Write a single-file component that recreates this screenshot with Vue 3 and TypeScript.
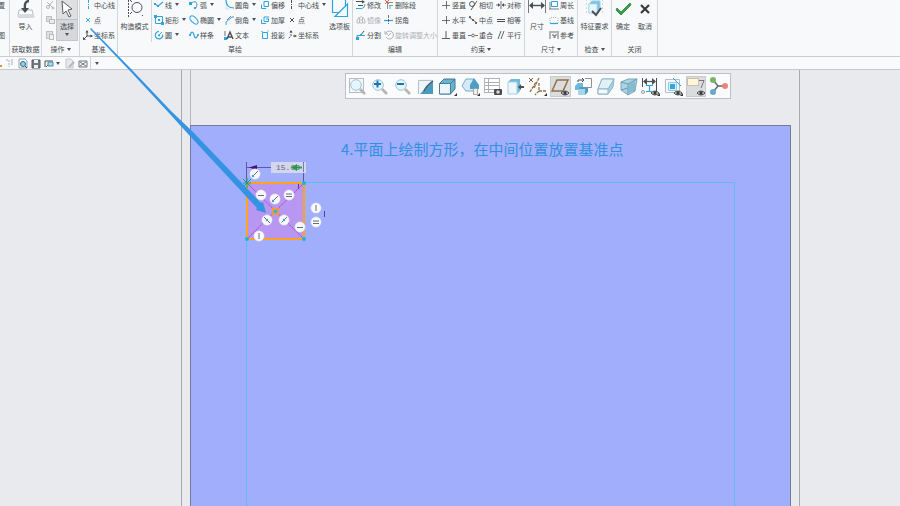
<script setup lang="ts">
interface Tool {
  icon: string
  label?: string
  name?: string
  caret?: boolean
  disabled?: boolean
}
interface Cell {
  kind: 'big' | 'stack' | 'rule'
  tool?: Tool
  active?: boolean
  tools?: Tool[]
}
interface Group {
  id: string
  label: string
  caret?: boolean
  cells: Cell[]
}

const t = (icon: string, label = '', caret = false, disabled = false): Tool => ({ icon, label, caret, disabled })
const big = (icon: string, label: string, caret = false, active = false): Cell => ({
  kind: 'big',
  tool: { icon, label, caret },
  active,
})
const stack = (...tools: Tool[]): Cell => ({ kind: 'stack', tools })

const groups: Group[] = [
  { id: 'edge', label: '', cells: [stack(t('', '置'), t('', ''), t('', '图'))] },
  { id: 'data', label: '获取数据', cells: [big('import', '导入')] },
  {
    id: 'ops',
    label: '操作',
    caret: true,
    cells: [
      stack(
        { icon: 'cut', name: '剪切', disabled: true },
        { icon: 'copy', name: '复制', disabled: true },
        { icon: 'paste', name: '粘贴', disabled: true },
      ),
      big('cursor', '选择', true, true),
    ],
  },
  { id: 'datum', label: '基准', cells: [stack(t('axisBlue', '中心线'), t('pointBlue', '点'), t('csys', '坐标系'))] },
  {
    id: 'sketch',
    label: '草绘',
    cells: [
      big('construct', '构造模式'),
      { kind: 'rule' },
      stack(t('line', '线', true), t('rect', '矩形', true), t('circle', '圆', true)),
      stack(t('arc', '弧', true), t('ellipse', '椭圆', true), t('spline', '样条')),
      stack(t('fillet', '圆角', true), t('chamfer', '倒角', true), t('text', '文本')),
      stack(t('offset', '偏移'), t('thicken', '加厚'), t('project', '投影')),
      stack(t('axis', '中心线', true), t('point', '点'), t('csysDash', '坐标系')),
      big('palette', '选项板'),
    ],
  },
  {
    id: 'edit',
    label: '编辑',
    cells: [
      stack(t('modify', '修改'), t('mirror', '镜像', false, true), t('divide', '分割')),
      stack(t('delseg', '删除段'), t('corner', '拐角'), t('rotate', '旋转调整大小', false, true)),
    ],
  },
  {
    id: 'constrain',
    label: '约束',
    caret: true,
    cells: [
      stack(t('plus', '竖直'), t('plus', '水平'), t('perp', '垂直')),
      stack(t('tangent', '相切'), t('mid', '中点'), t('coincident', '重合')),
      stack(t('symmetric', '对称'), t('equal', '相等'), t('parallel', '平行')),
    ],
  },
  {
    id: 'dimension',
    label: '尺寸',
    caret: true,
    cells: [big('dim', '尺寸'), stack(t('perimeter', '周长'), t('baseline', '基线'), t('reference', '参考'))],
  },
  { id: 'inspect', label: '检查', caret: true, cells: [big('feature', '特征要求')] },
  { id: 'close', label: '关闭', cells: [big('ok', '确定'), big('cancel', '取消')] },
]

const B = '#2fa3dc'
const D = '#4b4f53'
const s = (d: string, c: string, w = 1, extra = '') =>
  `<path d="${d}" fill="none" stroke="${c}" stroke-width="${w}" ${extra}/>`
const f = (d: string, c: string) => `<path d="${d}" fill="${c}"/>`
const dot = (x: number, y: number, r: number, c: string) => `<circle cx="${x}" cy="${y}" r="${r}" fill="${c}"/>`

const small: Record<string, string> = {
  cut: s('M2 2L8 8M8 1L4 6', '#b6b8ba') + `<circle cx="3" cy="7" r="1.5" fill="none" stroke="#b6b8ba"/><circle cx="8" cy="8" r="1" fill="none" stroke="#b6b8ba"/>`,
  copy: `<rect x="1.5" y="1.5" width="5" height="5" fill="#dcddde" stroke="#c0c1c3"/><rect x="4.5" y="4.5" width="5" height="4" fill="#ececed" stroke="#b9babc"/>`,
  paste: `<rect x="1.5" y="1.5" width="6" height="7" fill="#dfe0e1" stroke="#c0c1c3"/><rect x="4.5" y="4.5" width="4" height="5" fill="#f2f2f2" stroke="#bbb"/>`,
  axisBlue: s('M5.500 0V10', B, 1, 'stroke-dasharray="3 1 1 1"'),
  axis: s('M4.500 0V10', D, 1, 'stroke-dasharray="3 1 1 1"'),
  pointBlue: s('M3 3L7 7M7 3L3 7', B),
  point: s('M3 3L7 7M7 3L3 7', D),
  csys: s('M4 1V6H9M4 6L1 9', D) + f('M2.5 2.5L4 0L5.5 2.5ZM7.5 4.5L10 6L7.5 7.5ZM0 7L0 10L3 9.5Z', D),
  csysDash: s('M4 1V6L1 9M6 6H9', D, 1, 'stroke-dasharray="2 1"') + f('M2.5 2.5L4 0L5.5 2.5ZM7.5 4.5L10 6L7.5 7.5Z', D),
  line: s('M1 4L4 6L9 2', B, 1.2) + f('M0 3h2v2H0ZM3 5h2v2H3Z', B),
  rect: s('M1.5 1.5H8.5V8.5H1.5Z', B) + f('M0 0h3v3H0ZM7 7h3v3H7ZM4 4h2v2H4Z', B),
  circle: s('M5 1.5A3.7 3.7 0 1 0 8.6 4.5', B, 1.2) + dot(5, 5.5, 1, B) + s('M5 5L8 2', B),
  arc: s('M2 3Q7 0 8 4Q8 7 6 9', B) + f('M0 2h3v3H0ZM5 7h2v2H5Z', B),
  ellipse: `<ellipse cx="5" cy="5" rx="5" ry="2.7" transform="rotate(45 5 5)" fill="none" stroke="${B}"/>`,
  spline: s('M1 6C2 1 4 1 5 5S8 9 9 4', B, 1.2) + dot(1, 5, 1, B) + dot(9, 5, 1, B),
  fillet: s('M2 0Q2 8 10 8', B, 1.2) + s('M2 5V9H6', '#b9d9e8', 0.7),
  chamfer: s('M2 10V7L8 2H10', B) + s('M3 5L7 1', D, 0.7),
  text: f('M0 7h3v3H0Z', B) + s('M1 1V6', D, 0.8) + s('M3 9L6 2L9 9M4 7H8', D, 1.4),
  offset: s('M1.5 4.5V8.5H6M4 1.5H8.5V6.5H4Z', B),
  thicken: s('M1.5 4.5V8.5H6M4 2H9M4 2V6.5H8.5V4M6 4H9', B),
  project: s('M2.5 2.5H7.5V8.5H2.5Z', B) + s('M1 1.5H3M7 1H9', '#82c7e9'),
  modify: s('M0 1.500H8M2 5.5H7', D, 1) + s('M5 9Q9 8 9 4M0 8.5H5', B) + f('M6 0L9 2L6 3.5Z', D),
  mirror: s('M5 1V9', '#b8babc', 1, 'stroke-dasharray="2 1"') + s('M3.5 2Q0 5 1 8H3.5ZM6.5 2Q10 5 9 8H6.5Z', '#b8babc'),
  divide: s('M1 9V5.500H9', B, 1) + s('M4 6L8 1', D, 1) + f('M0 7h3v3H0ZM4 4h2v2H4Z', B),
  delseg: s('M3.500 9V2.500H9', '#8a7f7c', 0.9) + s('M1 0L5 4M5 0L1 4', '#d54f43', 0.9) + s('M5 5.500H9M6 5V9', B, 0.8),
  corner: s('M0 5.500H9', B, 1.2) + s('M4.5 0V9', D, 0.8, 'stroke-dasharray="3 1"'),
  rotate: s('M2 3A4 4 0 1 1 2 7M1 1V4H4M4 6L7 3', '#a6a8aa', 0.9),
  plus: s('M1 5.500H9M5.500 1V9', D, 0.8),
  perp: s('M1 8.5H9M5 1V8', D, 0.9),
  tangent: `<circle cx="4" cy="4" r="2.5" fill="none" stroke="${D}" stroke-width=".9"/>` + s('M3 10L9 1', D, 0.9),
  mid: s('M1 2L9 8', D, 0.9) + dot(2, 2, 1, D) + dot(5, 5, 1, D) + dot(8, 8, 1, D),
  coincident: s('M0 5.5H3M7 5.5H10', D, 0.8) + `<circle cx="5" cy="5.5" r="1.4" fill="none" stroke="${D}" stroke-width=".8"/>`,
  symmetric: s('M0 5H4M6 5H10M5 1V9', D, 0.8) + f('M2 3L4 5L2 7ZM8 3L6 5L8 7Z', D),
  equal: s('M1 4.500H9M1 6.500H9', D, 1),
  parallel: s('M2 9L5 1M5 9L8 1', D, 0.9),
  perimeter: s('M2.5 1.5H8.5V6.5H2.5Z', B) + s('M0 9H10M1 2V9', D, 0.7),
  baseline: s('M1 3V8M9 3V8M2 2.500H8', '#9aa0a5', 0.8, 'stroke-dasharray="1 1"') + s('M1 8.5H9', B, 1.2),
  reference: s('M1 1V9M9 1V9M2 2H8M3 5H5V8M6 5H8M6 5V8', D, 0.8),
}

const large: Record<string, string> = {
  import:
    `<path d="M4 13H17L19 20H3Z" fill="#fff" stroke="#b2b7bd"/><path d="M3 17H19V20H3Z" fill="#d5dbe2"/>` +
    s('M14 4Q9 4 10 12', D, 2.4) + f('M6 11H14L10 16Z', D),
  cursor: `<path d="M6 4L7 17L10 14L13 20L15 19L12 13L16 12Z" fill="#fff" stroke="#5c5d60"/>`,
  construct: s('M4.500 0V20', D, 1, 'stroke-dasharray="2 1"') + `<circle cx="13" cy="10.5" r="5" fill="none" stroke="${D}"/>` + s('M6 17L8 15M6 3L8 5M18 3L19 2M18 18L19 19', D, 1),
  palette: s('M3.500 3V15.500H16.500V3', B, 1.2) + `<path d="M18.500 7V19.500H6Z" fill="#f4fafd" stroke="${B}" stroke-width="1.200"/>`,
  dim: s('M2.500 3V16M19.500 3V16', '#777c80', 1) + s('M4 8.5H18', D, 1.4) + f('M3 8.5L7 5V12ZM19 8.5L15 5V12Z', D),
  feature: s('M2 3H20M2 7H20M2 11H20M2 15H20', '#9ba2a8', 0.8, 'stroke-dasharray="1 3"') + `<path d="M5 7L8 4H16V13L13 16H5Z" fill="#7fc3e2" stroke="#9dcfe8"/><path d="M5 7H13V16H5Z" fill="#e5f5fc" stroke="#a9d6eb" stroke-width=".7"/>` + s('M8 14L12 18L17 11', D, 2),
  ok: `<path d="M5 11L9 15L18 6L19 8L9 18L4 13Z" fill="#37a044" stroke="#278337" stroke-width=".8"/>`,
  cancel: s('M7 8L15 16', '#36393c', 2.2) + s('M15 8L7 16', '#36393c', 2.2),
}

const eye = `<path d="M10 16Q14 12 18 16Q14 20 10 16Z" fill="#e7e8ea" stroke="#44484c"/><circle cx="14" cy="16" r="1.7" fill="#34383c"/>`
const lens = (inner: string) =>
  s('M12 12L17 17', '#b9b4ad', 2.6) + `<circle cx="8" cy="8" r="5.3" fill="#e5f5fc" stroke="#9cc4d9"/>${inner}`
const corner = f('M19 16V19H16Z', '#333')

const view: { name: string; svg: string; active?: boolean }[] = [
  { name: '重新调整', svg: `<rect x="1.5" y="1.5" width="14" height="14" fill="#f5f7f8" stroke="#b7bcc0"/>` + lens('') },
  { name: '放大', svg: lens(s('M4 7H11M7.500 3.500V10.500', '#1875aa', 2)) },
  { name: '缩小', svg: lens(s('M4 7H11', '#1875aa', 2)) },
  { name: '重画', svg: f('M2 2H17V17H2Z', '#f1f5f7') + f('M4 17L17 3V17Z', '#4b9abd') + s('M2.5 17V3.5H17', '#b3c1c8') + s('M8 14Q10 9 17 4', '#455d68', 1.5) },
  { name: '显示样式', svg: `<path d="M1.500 6.500L6 2H17V12L12.500 17H1.500Z" fill="#68b2d2" stroke="#46778f"/><path d="M1.500 6.500H12.500V17H1.500Z" fill="#ecf7fc" stroke="#4b7e98"/>` + s('M12.500 6.500L17 2', '#46778f') + corner },
  { name: '已保存方向', svg: `<path d="M1 9L5 2H13L16 9L12 14H5Z" fill="#d3ebf5" stroke="#78aec8"/><path d="M9 8L13 1L18 8V12H9Z" fill="#4f9fc4"/><rect x="12.5" y="11.5" width="4" height="6" fill="#eee" stroke="#999" stroke-width=".8"/>` + corner },
  { name: '视图管理器', svg: `<rect x="1.5" y="1.5" width="15" height="14" fill="#fff" stroke="#b0b4b7"/>` + s('M2 5.500H16M2 8.5H16M2 12.500H16M5.500 2V15', '#a9afb3') + `<rect x="11" y="12" width="8" height="6" rx="1" fill="#4b4f53"/>` + dot(15, 15, 1.7, '#ddd') },
  { name: '透视图', svg: `<path d="M2 5L5 2H14V14L11 17H2Z" fill="#6fbcda"/><path d="M2 5H11V17H2Z" fill="#eef8fc" stroke="#a5cfe2"/>` + f('M12 10L15 7V9H18V11H15V13Z', D) },
  { name: '基准显示过滤器', svg: s('M1 1L5 5M5 1L1 5', '#7f6233') + s('M2 15L8 5M11 1L6 11M11 6V14H18M11 14L7 18', '#91703d', 1.3, 'stroke-dasharray="3 1"') + corner },
  { name: '平面显示', active: true, svg: `<path d="M6 3H17L12 14H1Z" fill="none" stroke="#92713f" stroke-width="1.5"/>` + eye },
  { name: '注释显示', svg: f('M1 9L4 6H9V11L6 13H1Z', '#6ebad8') + f('M4 12L6 10H14V15L11 18H4Z', '#4f9fc2') + f('M4 12H11V18H4Z', '#a8d6e9') + s('M11 1.500H17.500V10.500H12', '#8b9094') + s('M4 5V3H10M8 1L10 3L8 5', D) },
  { name: '消隐', svg: `<path d="M2 12L6 2H18L17 10L12 17H2Z" fill="#a5d3e5" stroke="#8fb4c3"/><path d="M2 12H12L18 2H6Z" fill="#dff2fa" stroke="#8fb4c3"/><path d="M2 12H12V17H2Z" fill="#f2fafd" stroke="#8fb4c3"/>` },
  { name: '轮廓', svg: `<path d="M2 5L9 2H18L16 14L9 18L2 13Z" fill="#a9d4e4" stroke="#7da6b7"/><path d="M2 5L9 7V18M9 7L18 2M2 13L9 11L16 14" fill="none" stroke="#6d9bae"/>` + f('M9 8L16 4V13L9 17Z', '#84bcd2') },
  { name: '尺寸显示', svg: s('M1.500 1V10M15.500 1V14', D) + s('M4 4.5H14', D, 1.2) + f('M2 4.5L6 1V8ZM15 4.5L11 1V8Z', D) + s('M5 8.500H12M8.500 9V14M5 14.500H11', B, 1.2) + `<circle cx="2" cy="15" r="1.5" fill="none" stroke="#999"/>` + eye + corner },
  { name: '草绘显示', svg: `<path d="M1.500 2.500H15.500V15.500H1.500Z" fill="#f6fafc" stroke="#b5bdc2"/><path d="M4.500 5.500H12.500V13.500H4.500Z" fill="#d8f1fc" stroke="#8ecdea"/><path d="M6 7H11V12H6Z" fill="#36a6da"/><path d="M9 1L17 9" stroke="${B}"/>` + eye + corner },
  { name: '标注显示', active: true, svg: `<rect x="0.500" y="1.500" width="11" height="7" fill="#fff5d9" stroke="#c9c1ae"/>` + s('M12 3.500H17L14 11', '#777') + eye },
  { name: '旋转中心', svg: s('M4 3L9 9L4 15M9 9H15', '#63686b', 1.5) + dot(4, 3, 3, '#7ab567') + dot(4, 15, 3, '#67a9cb') + dot(16, 9, 3, '#ed8279') },
]

const quick: Tool[] = [
  { icon: s('M0 8H3V5', '#d29a35', 2), name: '打开' },
  { icon: s('M2 2H5V9M7 2H10M7 4H10M7 6H10', '#a9adb1', 1, 'stroke-dasharray="2 1"'), name: '列表' },
  { icon: s('M2 1H8L10 3V10H2Z', '#9aa3aa') + `<circle cx="6" cy="6" r="2.500" fill="#8fd1ea" stroke="#256f91"/>` + s('M8 8L10 10', D), name: '预览' },
  { icon: `<path d="M2 2H10V10H2Z" fill="#737b81" stroke="#535a60"/><path d="M4 2H8V5H4ZM4 7H8V10H4Z" fill="#eef1f3"/>`, name: '保存' },
  { icon: s('M2 3H10M2 3V9M3 9L5 7', D) + `<path d="M5 4H10V8H5Z" fill="#a8d9ed" stroke="#4d8da9"/>`, name: '窗口', caret: true },
  { icon: `<path d="M2 1H7L9 3V10H2Z" fill="#e8e9ea" stroke="#c5c7c9"/>` + s('M5 9L10 4', '#b5b7b9', 2), name: '编辑', disabled: true },
  { icon: s('M2 3H10V9H2ZM3 4L9 8M9 4L3 8', '#62686c', 0.9), name: '关闭' },
]

interface Mark {
  x: number
  y: number
  d: string
  dot?: [number, number]
}
const H = 'M-3 0.500H3'
const V = 'M0 -3V3'
const E = 'M-3 -1H3M-3 1.500H3'
const S = 'M-2.500 2.500L3 -3'
const marks: Mark[] = [
  { x: 255, y: 174, d: S, dot: [-2, 2] },
  { x: 261, y: 195, d: H },
  { x: 275, y: 199, d: S, dot: [-2, 2] },
  { x: 289, y: 195, d: E },
  { x: 267, y: 220, d: 'M-3 -3L3 3', dot: [0, 0] },
  { x: 284, y: 220, d: S, dot: [0, 0] },
  { x: 300, y: 227, d: H },
  { x: 259, y: 236, d: V },
  { x: 316, y: 208, d: V },
  { x: 316, y: 222, d: E },
]
</script>

<template>
  <div class="app">
    <header class="ribbon">
      <section v-for="g in groups" :key="g.id" class="group" :class="g.id">
        <div class="body">
          <template v-for="(c, i) in g.cells" :key="i">
            <button v-if="c.kind === 'big'" type="button" class="big" :class="{ active: c.active }">
              <svg class="icon-large" viewBox="0 0 22 23" aria-hidden="true" v-html="large[c.tool!.icon]"></svg>
              <span class="big-label">{{ c.tool!.label }}</span>
              <i v-if="c.tool!.caret" class="caret"></i>
            </button>
            <span v-else-if="c.kind === 'rule'" class="rule"></span>
            <div v-else class="stack">
              <template v-for="(tool, j) in c.tools" :key="j">
                <button v-if="tool.icon || tool.label" type="button" class="tool" :disabled="tool.disabled" :aria-label="tool.name">
                  <svg v-if="tool.icon" class="icon-small" viewBox="0 0 10 10" aria-hidden="true" v-html="small[tool.icon]"></svg>
                  <span v-if="tool.label">{{ tool.label }}</span>
                  <i v-if="tool.caret" class="caret"></i>
                </button>
                <span v-else></span>
              </template>
            </div>
          </template>
        </div>
        <div class="group-label">{{ g.label }}<i v-if="g.caret" class="caret"></i></div>
      </section>
    </header>

    <nav class="quick">
      <button v-for="q in quick" :key="q.name" type="button" :aria-label="q.name" :disabled="q.disabled">
        <svg class="icon-quick" viewBox="0 0 11 11" aria-hidden="true" v-html="q.icon"></svg>
        <i v-if="q.caret" class="caret"></i>
      </button>
      <button type="button" class="more" aria-label="更多"><i class="caret"></i></button>
    </nav>

    <main class="workspace">
      <svg class="drawing" aria-hidden="true">
        <g transform="translate(0 -70)">
          <path d="M181.500 70V2000M799.500 70V2000" stroke="#aaa9ad" />
          <path d="M190.500 70V125" stroke="#bbb6bc" />
          <rect x="190" y="125" width="601" height="2000" fill="#a1aefc" />
          <path d="M190.500 2000V125.500H790.500V2000" fill="none" stroke="#75799f" />
          <path d="M246.500 2000V182.500H734.500V2000" fill="none" stroke="#64b7ef" />
          <rect x="247" y="183" width="57" height="56" fill="#b797f2" />
          <path d="M247 183L304 239M304 183L247 239" stroke="#a043bd" stroke-dasharray="2 1" />
          <rect x="247" y="183" width="57" height="56" fill="none" stroke="#ffa31c" stroke-width="2" />
          <path d="M246.500 162V182M303.500 162V182M247 167.500H304" stroke="#6552a9" />
          <path d="M249 167.500L257 165V170Z" fill="#40177f" />
          <rect x="271" y="162" width="35" height="11" fill="#d2d7ee" />
          <path d="M291 167.500L297 164V166.500H302V168.500H297V171Z" fill="#12b629" />
          <text x="276" y="170" class="value">15.00</text>
          <path d="M303.500 162V172" stroke="#7c7bb4" />
          <path d="M298.500 184V189M324.500 211V217" stroke="#63389d" />
          <g fill="#16b6dc">
            <circle cx="304" cy="183" r="2" />
            <circle cx="247" cy="239" r="2" />
            <circle cx="304" cy="239" r="2" />
          </g>
          <path d="M243 179L251 187M251 179L243 187M247 178V188M243 183H251" stroke="#159d89" />
          <path d="M272 208L279 215M279 208L272 215" stroke="#ff9914" stroke-width="2" />
          <circle cx="275.500" cy="211.500" r="3" fill="#ff9914" />
          <circle cx="275.500" cy="211.500" r="1.800" fill="#20b8ee" />
          <g v-for="(m, i) in marks" :key="i" :transform="`translate(${m.x} ${m.y})`">
            <circle r="5.200" fill="#f8f9ff" stroke="#d3cfe8" stroke-width="0.500" />
            <path :d="m.d" stroke="#555c68" stroke-width="0.900" />
            <circle v-if="m.dot" :cx="m.dot[0]" :cy="m.dot[1]" r="1.200" fill="#3fa0c8" />
          </g>
        </g>
      </svg>
      <div class="view-bar" role="toolbar">
        <button v-for="v in view" :key="v.name" type="button" :aria-label="v.name" :class="{ active: v.active }">
          <svg viewBox="0 0 19 19" aria-hidden="true" v-html="v.svg"></svg>
        </button>
      </div>
      <p class="note">4.平面上绘制方形，在中间位置放置基准点</p>
    </main>

    <svg class="pointer" aria-hidden="true">
      <path d="M91 28L133 71L171 111L193 132L261 203L263 202L266 213L256 210L257 208L189 135L169 113L131 72L90 29Z" fill="#3593e3" />
    </svg>
  </div>
</template>

<style>
body {
  margin: 0;
}
</style>

<style scoped>
.app {
  position: relative;
  display: flex;
  flex-direction: column;
  min-height: 100vh;
  overflow: hidden;
  background: #e8eaee;
  color: #46494d;
  font-family: "Noto Sans CJK SC", sans-serif;
  font-size: 7px;
  line-height: 12px;
}
button {
  margin: 0;
  padding: 0;
  border: 0;
  background: none;
  color: inherit;
  font: inherit;
  white-space: nowrap;
}
button:disabled {
  color: #aeb1b4;
}
svg {
  flex: none;
  display: block;
}
.caret {
  flex: none;
  display: inline-block;
  border: 2px solid transparent;
  border-top: 3px solid #4d5154;
  border-bottom: 0;
}

.ribbon {
  display: flex;
  height: 56px;
  overflow: hidden;
  background: #f7f9fb;
  border-bottom: 1px solid #c9cdd1;
}
.group {
  box-sizing: border-box;
  flex: none;
  display: flex;
  flex-direction: column;
  justify-content: flex-end;
  border-right: 1px solid #d3d6d9;
}
.body {
  flex: none;
  display: grid;
  height: 45px;
}
.group-label {
  flex: none;
  display: flex;
  align-items: center;
  justify-content: center;
  gap: 2px;
  height: 14px;
}
.edge { width: 10px; }
.edge .tool { justify-content: flex-end; width: 5px; }
.data { width: 32px; }
.ops { width: 38px; }
.ops .body { grid-template-columns: 11px 22px; padding-left: 3px; }
.datum { width: 38px; }
.datum .body { padding-left: 3px; }
.sketch { width: 235px; }
.sketch .body { grid-template-columns: 33px 3px 35px 35px 36px 27px 40px 25px; }
.edit { width: 85px; }
.edit .body { grid-template-columns: 28px 1fr; padding-left: 3px; }
.constrain { width: 87px; }
.constrain .body { grid-template-columns: 27px 28px 1fr; padding-left: 3px; }
.dimension { width: 53px; }
.dimension .body { grid-template-columns: 24px 1fr; }
.inspect { width: 34px; }
.close { width: 46px; }
.close .body { grid-template-columns: 22px 22px; }

.rule {
  width: 1px;
  background: #d3d6d9;
}
.stack {
  display: grid;
  grid-template-rows: repeat(3, 15px);
  min-width: 0;
}
.tool {
  display: flex;
  align-items: center;
  justify-content: flex-start;
  gap: 1px;
}
.tool .caret {
  margin-left: 2px;
}
.icon-small {
  width: 10px;
  height: 10px;
}
.big {
  display: flex;
  flex-direction: column;
  align-items: center;
  min-width: 0;
}
.big.active {
  height: 44px;
  background: linear-gradient(#dfe0e2 22px, #bfc1c4 22px, #bfc1c4 23px, #d7d8db 23px);
  box-shadow: inset 0 0 0 1px #c4c6c9;
}
.icon-large {
  width: 22px;
  height: 23px;
}
.big .caret {
  margin-top: 1px;
}

.quick {
  display: flex;
  align-items: center;
  gap: 2px;
  height: 12px;
  background: #f9fafc;
  border-bottom: 1px solid #c5c8cc;
}
.quick button {
  display: flex;
  align-items: center;
}
.quick button:first-child {
  width: 2px;
  overflow: hidden;
}
.quick .caret {
  margin: 0 2px;
}
.quick .more {
  height: 12px;
  padding-left: 2px;
  border-left: 1px solid #cfd2d5;
}
.icon-quick {
  width: 11px;
  height: 11px;
}

.workspace {
  position: relative;
  flex: 1;
}
.drawing {
  position: absolute;
  inset: 0;
  width: 100%;
  height: 100%;
}
.value {
  fill: #5f6382;
  font-family: "Liberation Mono", monospace;
  font-size: 8px;
}
.view-bar {
  position: absolute;
  top: 3px;
  left: 345px;
  box-sizing: border-box;
  display: grid;
  grid-template-columns: repeat(17, 1fr);
  width: 386px;
  height: 26px;
  background: #fafbfc;
  border: 1px solid #bdbfc2;
}
.view-bar button {
  display: flex;
  align-items: center;
  justify-content: center;
  margin: 2px 1px 1px;
}
.view-bar button.active {
  background: #dadcdf;
  box-shadow: inset 0 0 0 1px #c8cacd;
}
.view-bar svg {
  width: 19px;
  height: 19px;
}
.note {
  position: absolute;
  top: 68px;
  left: 341px;
  margin: 0;
  color: #3190e2;
  font-size: 15px;
  line-height: 22px;
  white-space: nowrap;
}
.pointer {
  position: absolute;
  inset: 0;
  width: 100%;
  height: 100%;
  pointer-events: none;
}
</style>
